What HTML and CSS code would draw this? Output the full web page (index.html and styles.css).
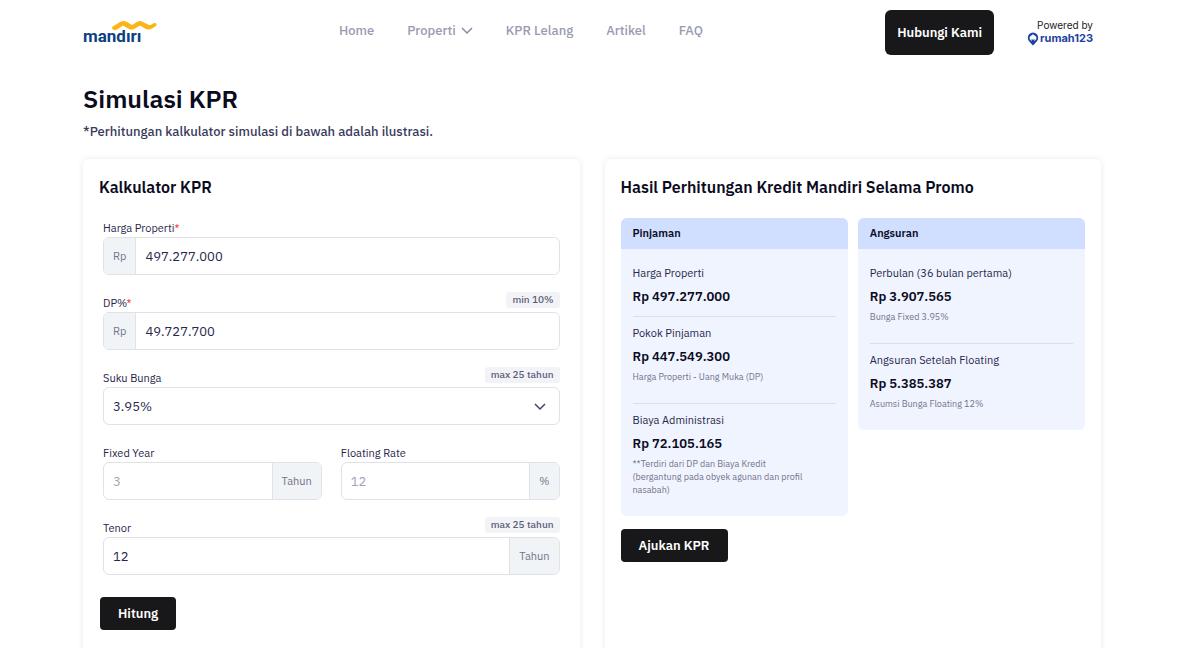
FILE: index.html
```html
<!DOCTYPE html>
<html lang="id">
<head>
<meta charset="utf-8">
<meta name="viewport" content="width=device-width, initial-scale=1">
<title>Simulasi KPR</title>
<link rel="stylesheet" href="styles.css">
</head>
<body>
<header class="header container">
  <a class="logo" href="#" aria-label="mandiri">
    <span class="logo-text">mandırı</span>
    <svg class="logo-wave" viewBox="0 0 45 10" aria-hidden="true"><path d="M0 6L8 1Q12 -1 15 1L20 4L25 1Q28 -1 31 1L37 4Q39 4.500 42 2Q46 2 44 5L40 7.500Q36 9.500 33 7.500L28 4.500L22 8Q19 9.500 16 7.500L11 4.500L5 8.500Q2 10 0.500 8Z" fill="#fbb515"/></svg>
  </a>
  <nav class="nav">
    <a href="#">Home</a>
    <a href="#">Properti <svg class="nav-chevron" viewBox="0 0 12 8" aria-hidden="true"><path d="M1 1L6 6L11 1"/></svg></a>
    <a href="#">KPR Lelang</a>
    <a href="#">Artikel</a>
    <a href="#">FAQ</a>
  </nav>
  <div class="header-side">
    <button class="button button-contact" type="button">Hubungi Kami</button>
    <div class="powered">
      <span>Powered by</span>
      <span class="brand"><svg class="pin" viewBox="0 0 12 14" aria-hidden="true"><path fill-rule="evenodd" d="M6 0.500A5.200 5.200 0 0 1 11.200 5.700C11.200 8.500 9 10 7.700 11.700L6 13.500L4.300 11.700C3 10 0.800 8.500 0.800 5.700A5.200 5.200 0 0 1 6 0.500ZM6 2.300L2.700 4.800V7L4.600 9.200V6.800L6 8L7.400 6.800V9.200L9.300 7V4.800Z" fill="#1e429f"/></svg>rumah123</span>
    </div>
  </div>
</header>
<main class="container">
  <h1 class="page-title">Simulasi KPR</h1>
  <p class="page-note">*Perhitungan kalkulator simulasi di bawah adalah ilustrasi.</p>
  <div class="cards">
    <section class="card">
      <h2 class="card-title">Kalkulator KPR</h2>
      <form class="form">
        <div class="field">
          <div class="field-head"><label for="price">Harga Properti<span class="required">*</span></label></div>
          <div class="control"><span class="addon addon-start">Rp</span><input id="price" type="text" value="497.277.000"></div>
        </div>
        <div class="field">
          <div class="field-head"><label for="dp">DP%<span class="required">*</span></label><span class="badge">min 10%</span></div>
          <div class="control"><span class="addon addon-start">Rp</span><input id="dp" type="text" value="49.727.700"></div>
        </div>
        <div class="field">
          <div class="field-head"><label for="rate">Suku Bunga</label><span class="badge">max 25 tahun</span></div>
          <div class="control">
            <select id="rate"><option>3.95%</option></select>
            <svg class="select-chevron" viewBox="0 0 12 8" aria-hidden="true"><path d="M1 1L6 6L11 1"/></svg>
          </div>
        </div>
        <div class="field-row">
          <div class="field">
            <div class="field-head"><label for="fixed">Fixed Year</label></div>
            <div class="control"><input id="fixed" type="text" placeholder="3"><span class="addon addon-end">Tahun</span></div>
          </div>
          <div class="field">
            <div class="field-head"><label for="floating">Floating Rate</label></div>
            <div class="control"><input id="floating" type="text" placeholder="12"><span class="addon addon-end">%</span></div>
          </div>
        </div>
        <div class="field">
          <div class="field-head"><label for="tenor">Tenor</label><span class="badge">max 25 tahun</span></div>
          <div class="control"><input id="tenor" type="text" value="12"><span class="addon addon-end">Tahun</span></div>
        </div>
      </form>
      <button class="button button-submit" type="button">Hitung</button>
    </section>
    <section class="card">
      <h2 class="card-title">Hasil Perhitungan Kredit Mandiri Selama Promo</h2>
      <div class="results">
        <section class="result">
          <h3 class="result-title">Pinjaman</h3>
          <div class="result-body">
            <div class="item"><p class="item-label">Harga Properti</p><p class="item-value">Rp 497.277.000</p></div>
            <div class="item"><p class="item-label">Pokok Pinjaman</p><p class="item-value">Rp 447.549.300</p><p class="item-note">Harga Properti - Uang Muka (DP)</p></div>
            <div class="item"><p class="item-label">Biaya Administrasi</p><p class="item-value">Rp 72.105.165</p><p class="item-note">**Terdiri dari DP dan Biaya Kredit (bergantung pada obyek agunan dan profil nasabah)</p></div>
          </div>
        </section>
        <section class="result">
          <h3 class="result-title">Angsuran</h3>
          <div class="result-body">
            <div class="item"><p class="item-label">Perbulan (36 bulan pertama)</p><p class="item-value">Rp 3.907.565</p><p class="item-note">Bunga Fixed 3.95%</p></div>
            <div class="item"><p class="item-label">Angsuran Setelah Floating</p><p class="item-value">Rp 5.385.387</p><p class="item-note">Asumsi Bunga Floating 12%</p></div>
          </div>
        </section>
      </div>
      <button class="button" type="button">Ajukan KPR</button>
    </section>
  </div>
</main>
</body>
</html>
```
FILE: styles.css
```css
* { box-sizing: border-box; }
body {
  margin: 0;
  padding: 0 99px 0 83px;
  background: #fff;
  color: #27274b;
  font-family: "IBM Plex Sans", "Noto Sans", sans-serif;
  font-size: 13px;
}
h1, h2, h3, p { margin: 0; color: #0b0b1e; }
a { color: inherit; text-decoration: none; }
button, input, select { font: inherit; color: inherit; }
.container { max-width: 1280px; margin: 0 auto; }

.header { display: flex; align-items: center; height: 64px; }
.logo { position: relative; width: 256px; }
.logo-text { color: #0b4182; font-family: Roboto, sans-serif; font-size: 17px; font-weight: 700; line-height: 24px; display: block; padding-top: 8px; }
.logo-wave { position: absolute; left: 29px; top: 5px; width: 45px; height: 10px; }
.nav { display: flex; gap: 33px; color: #9a9ab0; font-weight: 500; line-height: 20px; padding-bottom: 2px; white-space: nowrap; }
.nav-chevron { width: 12px; height: 8px; margin-left: 2px; }
.nav-chevron path, .select-chevron path { fill: none; stroke: #8a8aa3; stroke-width: 1.5; }
.header-side { display: flex; align-items: center; gap: 33px; margin-left: auto; padding-right: 8px; }
.powered { display: flex; flex-direction: column; align-items: flex-end; color: #222; font: 400 10px/13px Inter, sans-serif; }
.brand { display: flex; align-items: center; gap: 1px; color: #1e429f; font: 700 11px/13px Inter, sans-serif; }
.pin { width: 12px; height: 14px; }

.button { border: 0; border-radius: 4px; background: #18181b; color: #fff; font-size: 13px; font-weight: 600; line-height: 17px; padding: 8px 18px; }
.button-contact { border-radius: 6px; padding: 14px 12px; }

.page-title { padding-top: 17px; font-size: 25px; font-weight: 600; line-height: 36px; }
.page-note { padding-top: 5px; color: #3a3a5c; font-weight: 500; line-height: 20px; }
.cards { display: grid; grid-template-columns: repeat(2, minmax(0, 1fr)); gap: 25px; padding-top: 17px; }
.card { min-height: 500px; padding: 16px; border-radius: 6px; box-shadow: 0 0 6px rgba(0, 0, 0, 0.09); }
.card-title { font-size: 16px; font-weight: 600; line-height: 24px; }

.form { display: flex; flex-direction: column; gap: 17px; padding: 18px 4px 22px; }
.field-row { display: grid; grid-template-columns: repeat(2, minmax(0, 1fr)); gap: 19px; }
.field-head { display: flex; justify-content: space-between; align-items: flex-end; height: 20px; font-size: 11px; line-height: 18px; }
.required { color: #ef2b2b; }
.badge { align-self: flex-start; border-radius: 3px; background: #f1f3f6; color: #5c5c7a; padding: 0 6px; font-size: 10px; font-weight: 500; line-height: 16px; }
.control { position: relative; display: flex; height: 38px; border: 1px solid #e0e2e6; border-radius: 6px; overflow: hidden; }
.control input, .control select { flex: 1; min-width: 0; border: 0; padding: 0 9px; background: transparent; color: #27274b; font-size: 13px; appearance: none; }
.control input::placeholder { color: #a3a3b8; opacity: 1; }
.addon { display: flex; align-items: center; background: #f1f4f6; color: #73738c; font-size: 11px; padding: 0 9px; }
.addon-start { border-right: 1px solid #e0e2e6; }
.addon-end { border-left: 1px solid #e0e2e6; }
.select-chevron { position: absolute; right: 13px; top: 15px; width: 12px; height: 8px; pointer-events: none; }
.select-chevron path { stroke: #44446a; }
.button-submit { margin-left: 1px; }

.results { display: grid; grid-template-columns: repeat(2, minmax(0, 1fr)); gap: 10px; align-items: start; padding: 19px 0 13px; }
.result { border-radius: 6px; overflow: hidden; background: #f0f4ff; }
.result-title { background: #d0deff; padding: 0 12px; font-size: 11px; font-weight: 600; line-height: 31px; }
.result-body { padding: 8px 12px 0; }
.item { padding: 7px 0; }
.item + .item { border-top: 1px solid #d9deeb; }
.item-label { color: #27274b; font-size: 11px; line-height: 18px; }
.item-value { padding-top: 3px; font-size: 13px; font-weight: 600; line-height: 24px; }
.item-note { max-width: 180px; padding: 1px 0 13px; color: #73738c; font-size: 9px; line-height: 13px; }
```
